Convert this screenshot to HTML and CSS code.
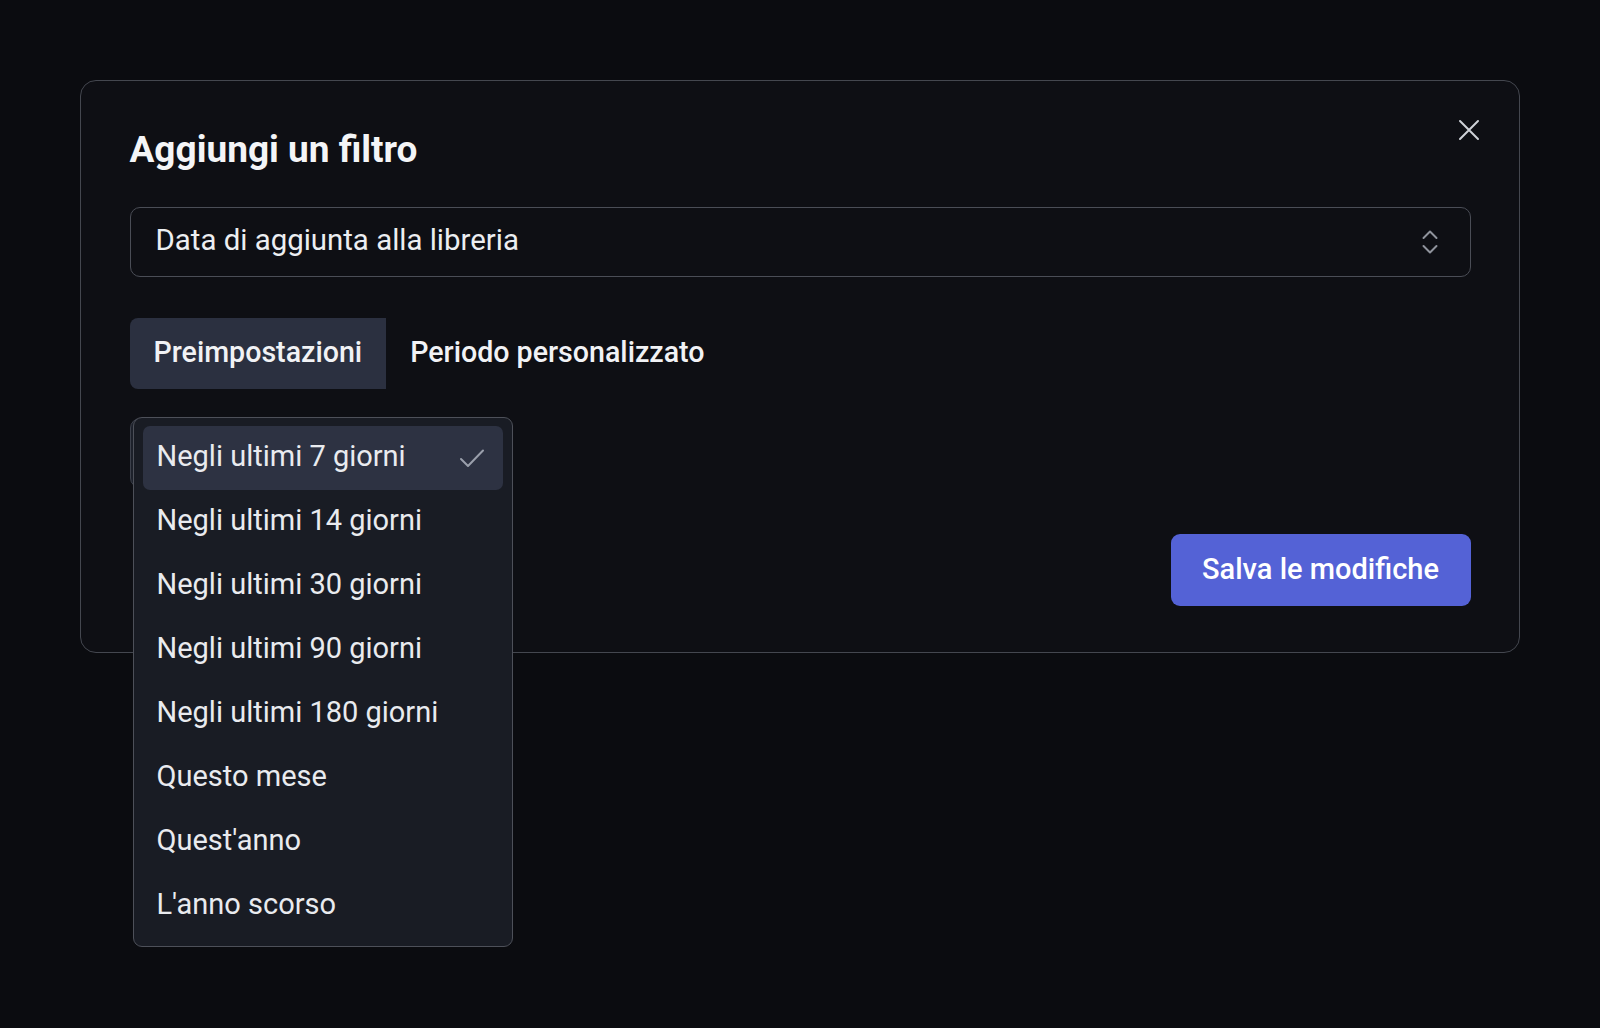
FILE: index.html
```html
<!DOCTYPE html>
<html lang="it">
<head>
<meta charset="utf-8">
<title>Aggiungi un filtro</title>
<link rel="stylesheet" href="styles.css">
</head>
<body>
<div class="modal">
  <button class="close" aria-label="Chiudi">
    <svg width="22" height="22" viewBox="0 0 22 22" fill="none" stroke="currentColor" stroke-width="2" stroke-linecap="round"><path d="M2 2 L20 20 M20 2 L2 20"/></svg>
  </button>
  <h2 class="title">Aggiungi un filtro</h2>
  <div class="select">
    <span class="select-text">Data di aggiunta alla libreria</span>
    <svg class="chev" width="16" height="26" viewBox="0 0 16 26" fill="none" stroke="currentColor" stroke-width="2" stroke-linecap="round" stroke-linejoin="round"><path d="M1.5 9 L8 2.5 L14.5 9 M1.5 17 L8 23.5 L14.5 17"/></svg>
  </div>
  <div class="tabs">
    <div class="tab active">Preimpostazioni</div>
    <div class="tab">Periodo personalizzato</div>
  </div>
  <div class="preset">
    <div class="trigger"></div>
    <ul class="dropdown">
      <li class="item selected"><span>Negli ultimi 7 giorni</span>
        <svg class="check" width="26" height="20" viewBox="0 0 26 20" fill="none" stroke="currentColor" stroke-width="2" stroke-linecap="round" stroke-linejoin="round"><path d="M2 11 L9 18 L24 2.5"/></svg>
      </li>
      <li class="item"><span>Negli ultimi 14 giorni</span></li>
      <li class="item"><span>Negli ultimi 30 giorni</span></li>
      <li class="item"><span>Negli ultimi 90 giorni</span></li>
      <li class="item"><span>Negli ultimi 180 giorni</span></li>
      <li class="item"><span>Questo mese</span></li>
      <li class="item"><span>Quest'anno</span></li>
      <li class="item"><span>L'anno scorso</span></li>
    </ul>
  </div>
  <div class="footer">
    <button class="save">Salva le modifiche</button>
  </div>
</div>
</body>
</html>
```

FILE: styles.css
```css
* { box-sizing: border-box; }

html, body {
  margin: 0;
  background: #0b0c10;
}

body {
  min-height: 1028px;
  padding: 80px;
  font-family: Roboto, "Noto Sans", sans-serif;
  color: #eef0f3;
}

.modal {
  position: relative;
  width: 1440px;
  background: #0e0f14;
  border: 1.5px solid #44474f;
  border-radius: 16px;
  padding: 46.5px 48.5px 46.5px 48.5px;
}

.close {
  position: absolute;
  top: 38px;
  right: 39px;
  width: 22px;
  height: 22px;
  padding: 0;
  border: 0;
  background: none;
  color: #cfd2d8;
  display: flex;
}

.title {
  margin: 0;
  font-size: 37px;
  line-height: 44px;
  font-weight: 700;
  color: #f4f5f7;
}

.select {
  margin-top: 35px;
  height: 70px;
  border: 1.5px solid #4a4d56;
  border-radius: 10px;
  display: flex;
  align-items: center;
  justify-content: space-between;
  padding: 0 32px 0 25px;
}

.select-text {
  font-size: 29.4px;
  line-height: 34px;
  padding-bottom: 3px;
  color: #eceef1;
}

.chev {
  color: #8f939c;
}

.tabs {
  margin-top: 41px;
  display: flex;
}

.tab {
  height: 71px;
  padding: 0 24px 3px;
  display: flex;
  align-items: center;
  font-size: 28.6px;
  font-weight: 500;
  color: #f1f2f5;
}

.tab.active {
  background: #2b3040;
  border-radius: 8px 0 0 8px;
}

.preset {
  position: relative;
  margin-top: 29px;
  width: 380px;
  height: 70px;
}

.trigger {
  height: 70px;
  border: 1.5px solid #3c404b;
  border-radius: 10px;
  background: #1d212b;
}

.dropdown {
  position: absolute;
  top: -1px;
  left: 3px;
  width: 380px;
  margin: 0;
  padding: 8px 9px;
  list-style: none;
  background: #191c24;
  border: 1.5px solid #4d5059;
  border-radius: 9px;
  z-index: 2;
}

.item {
  height: 64px;
  display: flex;
  align-items: center;
  justify-content: space-between;
  padding: 0 18px 0 14px;
  border-radius: 7px;
  font-size: 29px;
  line-height: 34px;
  color: #e9ebef;
}

.item span {
  padding-bottom: 3px;
}

.item.selected {
  background: #2d3242;
}

.check {
  color: #9a9fab;
}

.footer {
  margin-top: 46px;
  display: flex;
  justify-content: flex-end;
}

.save {
  width: 300px;
  height: 72px;
  border: 0;
  border-radius: 9px;
  background: #5462d6;
  color: #ffffff;
  font-family: Roboto, "Noto Sans", sans-serif;
  font-size: 29px;
  font-weight: 500;
  padding-bottom: 2px;
}
```
